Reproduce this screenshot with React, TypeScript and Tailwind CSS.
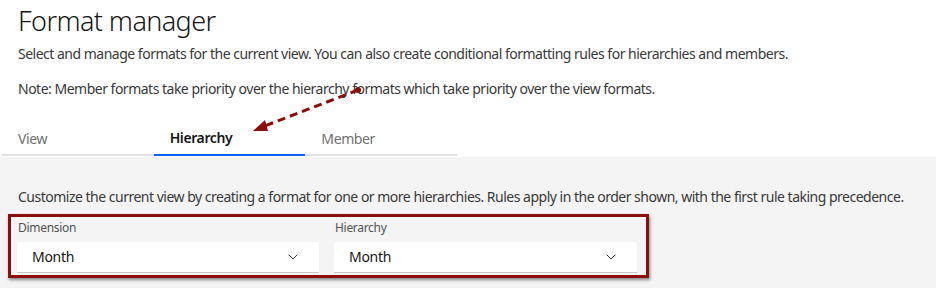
import { ChevronDown } from 'lucide-react'

const tabs = ['View', 'Hierarchy', 'Member']

function Select({ label, value }: { label: string; value: string }) {
  return (
    <div className="flex flex-col">
      <label className="text-xs leading-4 tracking-[-0.3px] text-[#525252] pl-px mb-[6px]">{label}</label>
      <div className="h-[31px] bg-white border-b border-[#c6c6c6] flex items-center justify-between pl-[15px] pr-[18px]">
        <span className="text-sm tracking-[-0.3px] text-[#161616]">{value}</span>
        <ChevronDown className="w-4 h-4 text-[#161616]" strokeWidth={1.25} />
      </div>
    </div>
  )
}

export default function App() {
  return (
    <div className="relative w-[936px] h-[288px] bg-white overflow-hidden font-['Noto_Sans',sans-serif]">
      {/* header */}
      <div className="px-[18px] pt-[3px]">
        <h1 className="text-[27px] leading-[36px] font-light tracking-[-0.6px] text-[#161616]">Format manager</h1>
        <p className="mt-[5px] text-sm leading-5 tracking-[-0.5px] text-[#393939]">
          Select and manage formats for the current view. You can also create conditional formatting rules for
          hierarchies and members.
        </p>
        <p className="mt-[15px] text-sm leading-5 tracking-[-0.5px] text-[#393939]">
          Note: Member formats take priority over the hierarchy formats which take priority over the view formats.
        </p>
      </div>

      {/* tabs */}
      <div className="mt-[23px] ml-[2px] w-[455px] flex border-b-2 border-[#e0e0e0]">
        {tabs.map((t) => (
          <div
            key={t}
            className={`w-[152px] h-[34px] -mb-[2px] pl-4 flex items-center text-sm tracking-[-0.4px] ${
              t === 'Hierarchy'
                ? 'font-semibold text-[#161616] border-b-2 border-[#0f62fe]'
                : 'text-[#6f6f6f]'
            }`}
          >
            {t}
          </div>
        ))}
      </div>

      {/* panel */}
      <div className="mt-px bg-[#f4f4f4] h-[131px] pt-[30px]">
        <p className="px-[18px] text-sm leading-5 tracking-[-0.5px] text-[#393939] whitespace-nowrap">
          Customize the current view by creating a format for one or more hierarchies. Rules apply in the order shown,
          with the first rule taking precedence.
        </p>
        <div className="ml-2 mt-[7px] w-[641px] border-[3px] border-[#8b0e0e] shadow-[1px_2px_3px_rgba(0,0,0,0.45)] pt-[3px] pb-[2px] pl-[6px] pr-[9px] grid grid-cols-[302px_303px] gap-x-[15px]">
          <Select label="Dimension" value="Month" />
          <Select label="Hierarchy" value="Month" />
        </div>
      </div>

      {/* annotation arrow */}
      <svg className="absolute left-0 top-0 pointer-events-none" width="936" height="288">
        <line x1="358" y1="90" x2="262" y2="127" stroke="#8b0e0e" strokeWidth="3" strokeDasharray="8 5" />
        <circle cx="358" cy="90" r="3" fill="#8b0e0e" />
        <polygon points="253,131 265,120 268,131" fill="#8b0e0e" />
      </svg>
    </div>
  )
}
